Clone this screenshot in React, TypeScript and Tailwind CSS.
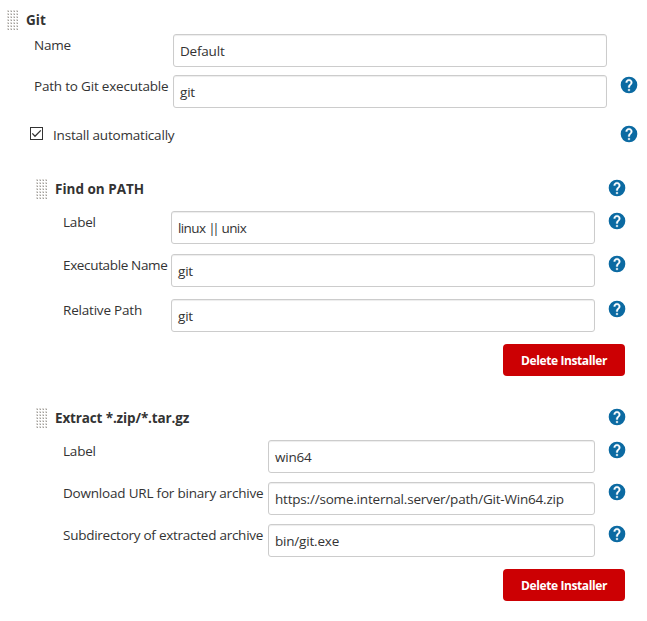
import React from "react";

function Help() {
  return (
    <svg viewBox="0 0 24 24" className="block h-5 w-5 shrink-0" role="img" aria-label="Help">
      <circle cx="12" cy="12" r="10" fill="#0b6aa2" />
      <path
        fill="#fff"
        stroke="#fff"
        strokeWidth="0.4"
        d="M13 19h-2v-2h2v2zm2.07-7.75l-.9.92C13.45 12.9 13 13.5 13 15h-2v-.5c0-1.1.45-2.1 1.17-2.83l1.24-1.26c.37-.36.59-.86.59-1.41 0-1.1-.9-2-2-2s-2 .9-2 2H8c0-2.21 1.79-4 4-4s4 1.79 4 4c0 .88-.36 1.68-.93 2.25z"
      />
    </svg>
  );
}

function Grip() {
  const cols = [0, 3, 6, 9];
  const rows = [0, 3, 6, 9, 12, 15, 18];
  return (
    <svg width="12" height="21" shapeRendering="crispEdges" className="block shrink-0">
      {rows.map((y) =>
        cols.map((x) => (
          <g key={`${x}-${y}`}>
            <rect x={x} y={y} width="2" height="2" fill="#dedcd9" />
            <rect x={x + 1} y={y + 1} width="1" height="1" fill="#a09e9b" />
          </g>
        )),
      )}
    </svg>
  );
}

interface FieldProps {
  label: string;
  value: React.ReactNode;
  labelClass: string;
  help?: boolean;
}

function Field({ label, value, labelClass, help = true }: FieldProps) {
  return (
    <div className="flex h-[33px] items-start">
      <div className={`shrink-0 pt-px leading-5 whitespace-nowrap ${labelClass}`}>{label}</div>
      <div className="flex h-[33px] min-w-0 flex-1 items-center rounded-[3px] border border-[#ccc] bg-white pt-px pl-1.5 whitespace-nowrap shadow-[inset_0_1px_1px_rgba(0,0,0,0.075)]">
        <span>{value}</span>
      </div>
      <div className="ml-3 h-5 w-5 shrink-0">{help && <Help />}</div>
    </div>
  );
}

function Heading({ children, help, className = "" }: { children: string; help?: boolean; className?: string }) {
  return (
    <div className="flex h-5 items-start">
      <div className={`flex flex-1 items-start ${className}`}>
        <Grip />
        <h2 className="ml-[7px] text-[13.5px] leading-5 font-bold whitespace-nowrap">{children}</h2>
      </div>
      {help && <Help />}
    </div>
  );
}

function DeleteButton() {
  return (
    <button className="mt-3 mr-0.5 flex h-8 w-[122px] items-center justify-center self-end rounded-[4px] bg-[#cc0003] pt-px text-[12px] font-bold tracking-[-0.4px] whitespace-nowrap text-white">
      <span>Delete Installer</span>
    </button>
  );
}

export default function App() {
  return (
    <main className="h-[621px] w-[647px] overflow-hidden bg-white pt-2.5 pr-2 pl-[7px] font-['Open_Sans','Noto_Sans',sans-serif] text-[13.5px] tracking-[-0.2px] text-[#333]">
      <Heading className="tracking-normal">Git</Heading>
      <div className="mt-1 flex flex-col gap-2 pl-[27px]">
        <Field label="Name" value="Default" labelClass="w-[139px]" help={false} />
        <Field label="Path to Git executable" value="git" labelClass="w-[139px]" />
      </div>

      <div className="mt-4 flex h-5 items-center pl-[23px]">
        <svg width="13" height="13" viewBox="0 0 13 13" className="-mt-0.5 block">
          <rect x="0.5" y="0.5" width="12" height="12" fill="#fff" stroke="#333" />
          <path d="M2.3 6.4 5 9.2 10.8 3.4" fill="none" stroke="#333" strokeWidth="1.3" />
        </svg>
        <span className="ml-2.5 flex-1 pt-[3px]">Install automatically</span>
        <Help />
      </div>

      <section className="mt-[34px] mr-3 ml-[29px] flex flex-col">
        <Heading help className="pt-px tracking-normal">Find on PATH</Heading>
        <div className="mt-[13px] flex flex-col pl-[27px]">
          <Field
            label="Label"
            value={
              <span className="tracking-[-0.6px]">
                linux <span className="mr-[2.4px] tracking-[-3.5px]">||</span> unix
              </span>
            }
            labelClass="w-[108px]"
          />
          <div className="h-2.5" />
          <Field label="Executable Name" value="git" labelClass="w-[108px] tracking-[-0.35px]" />
          <div className="h-3" />
          <Field label="Relative Path" value="git" labelClass="w-[108px]" />
        </div>
        <DeleteButton />
      </section>

      <section className="mt-[31px] mr-3 ml-[29px] flex flex-col">
        <Heading help className="pt-px tracking-[-0.14px]">Extract *.zip/*.tar.gz</Heading>
        <div className="mt-[13px] flex flex-col gap-[9px] pl-[27px]">
          <Field label="Label" value="win64" labelClass="w-[205px]" />
          <Field
            label="Download URL for binary archive"
            value="https://some.internal.server/path/Git-Win64.zip"
            labelClass="w-[205px]"
          />
          <Field
            label="Subdirectory of extracted archive"
            value="bin/git.exe"
            labelClass="w-[205px] tracking-[-0.26px]"
          />
        </div>
        <DeleteButton />
      </section>
    </main>
  );
}
